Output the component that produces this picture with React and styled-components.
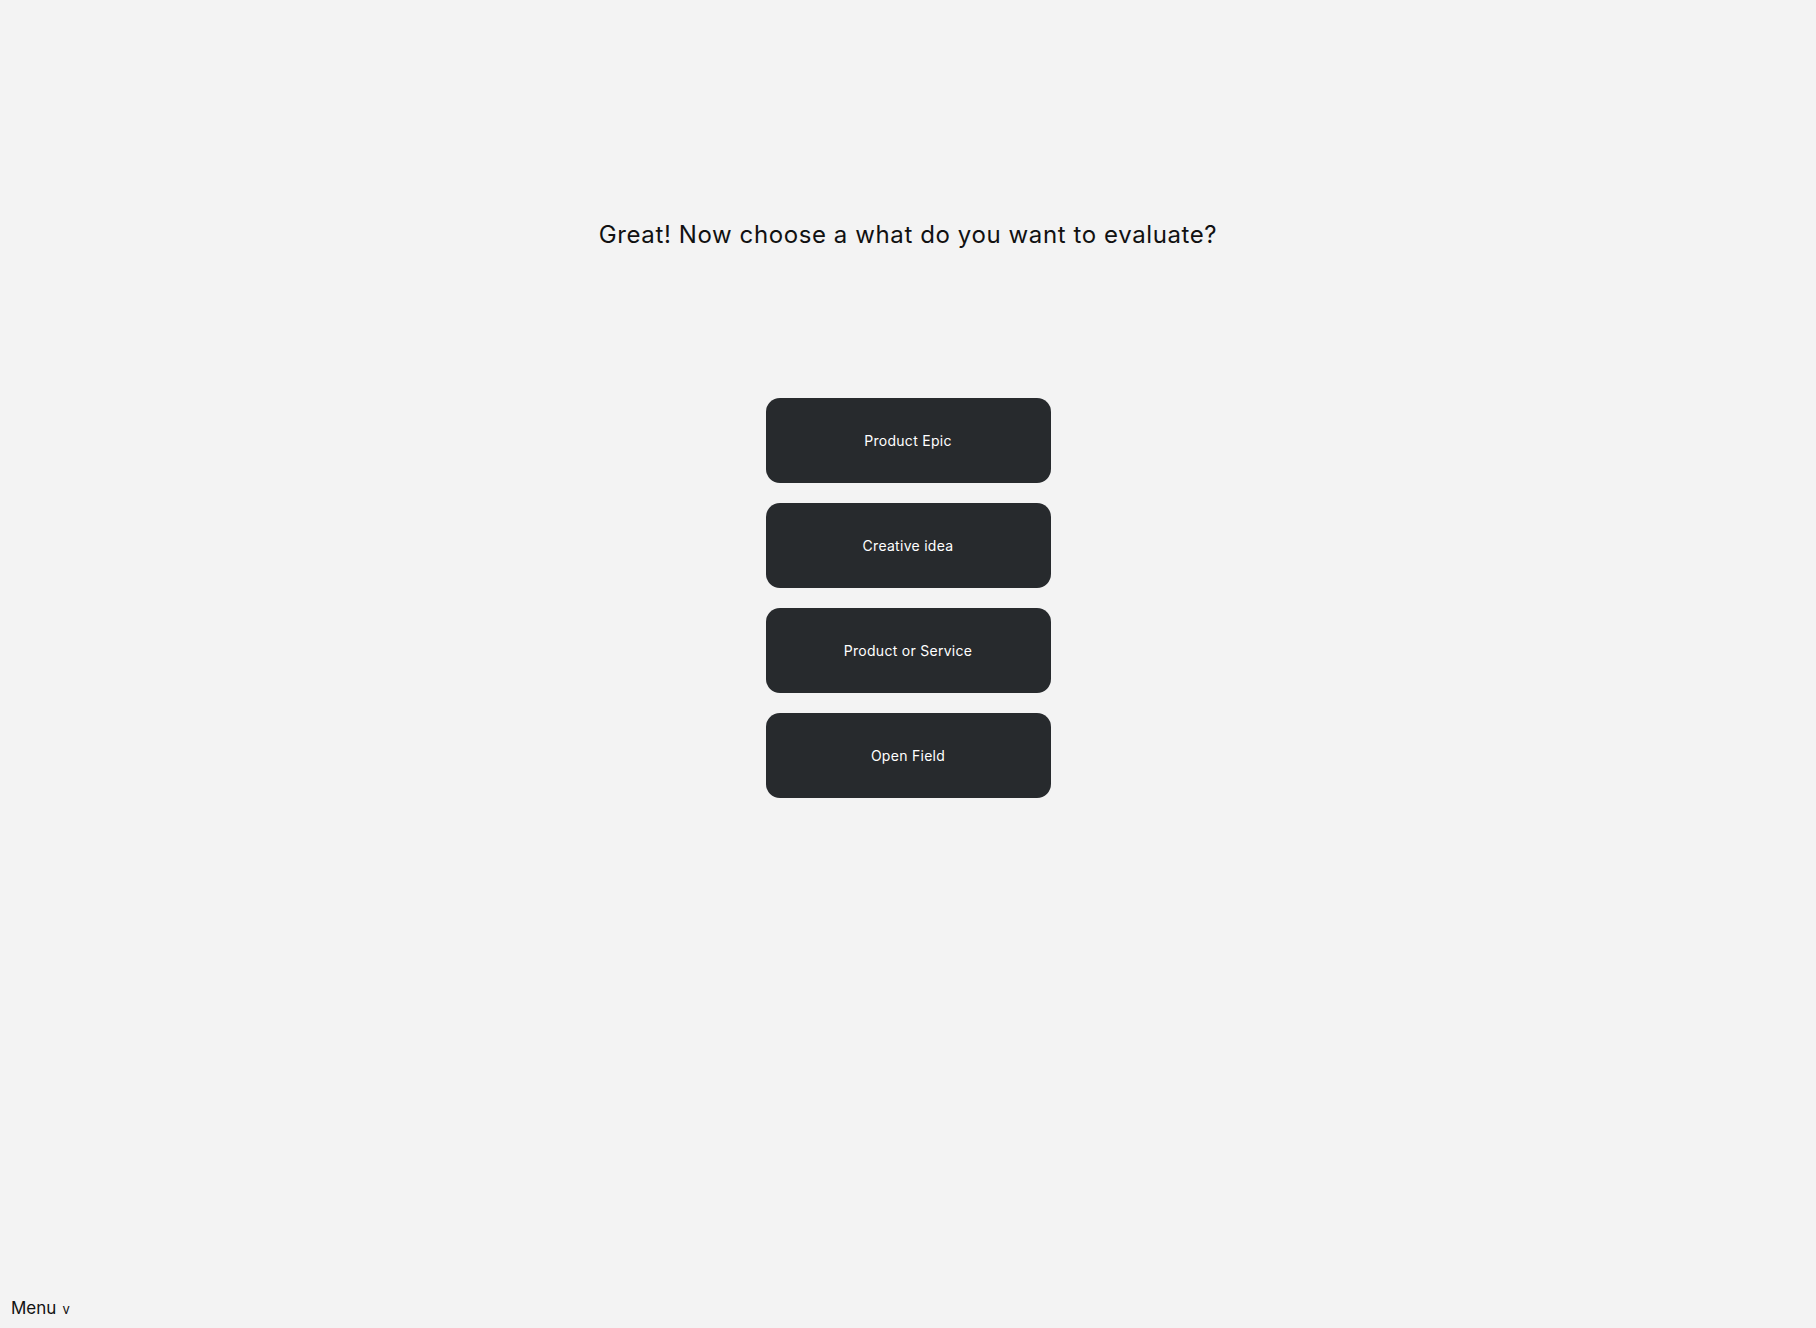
import styled, { createGlobalStyle } from 'styled-components'

const options = ['Product Epic', 'Creative idea', 'Product or Service', 'Open Field'];

export default function App () {
    return(
        <>
            <GlobalStyle/>
            <Page>
                <Main>
                    <Title>Great! Now choose a what do you want to evaluate?</Title>
                    <Choices>
                        {options.map(o => <Choice key={o}>{o}</Choice>)}
                    </Choices>
                </Main>
                <Footer>
                    <MenuToggle>Menu <Caret>v</Caret></MenuToggle>
                </Footer>
            </Page>
        </>
    )
};

//styles______________________________________________
const GlobalStyle = createGlobalStyle`
    html, body {
        margin: 0;
        padding: 0;
        background: #f3f3f3;
        font-family: Inter, "Noto Sans", sans-serif;
    }
`;
const Page = styled.div`
    min-height: 100vh;
    display: flex;
    flex-direction: column;
`;
const Main = styled.main`
    flex: 1;
    display: flex;
    flex-direction: column;
    align-items: center;
    padding-top: 218px;
`;
const Title = styled.h1`
    margin: 0;
    font-size: 24px;
    line-height: 34px;
    font-weight: 400;
    color: #111;
    letter-spacing: 0.025em;
`;
const Choices = styled.div`
    margin-top: 146px;
    display: flex;
    flex-direction: column;
    gap: 20px;
`;
const Choice = styled.button`
    width: 285px;
    height: 85px;
    border: none;
    border-radius: 14px;
    background: #272a2d;
    color: #fff;
    font-family: Inter, "Noto Sans", sans-serif;
    font-size: 14px;
    letter-spacing: 0.02em;
    cursor: pointer;
`;
const Footer = styled.footer`
    padding: 0 0 10px 11px;
`;
const MenuToggle = styled.div`
    font-size: 17px;
    color: #111;
    display: flex;
    align-items: baseline;
    gap: 6px;
`;
const Caret = styled.span`
    font-size: 13px;
`;
